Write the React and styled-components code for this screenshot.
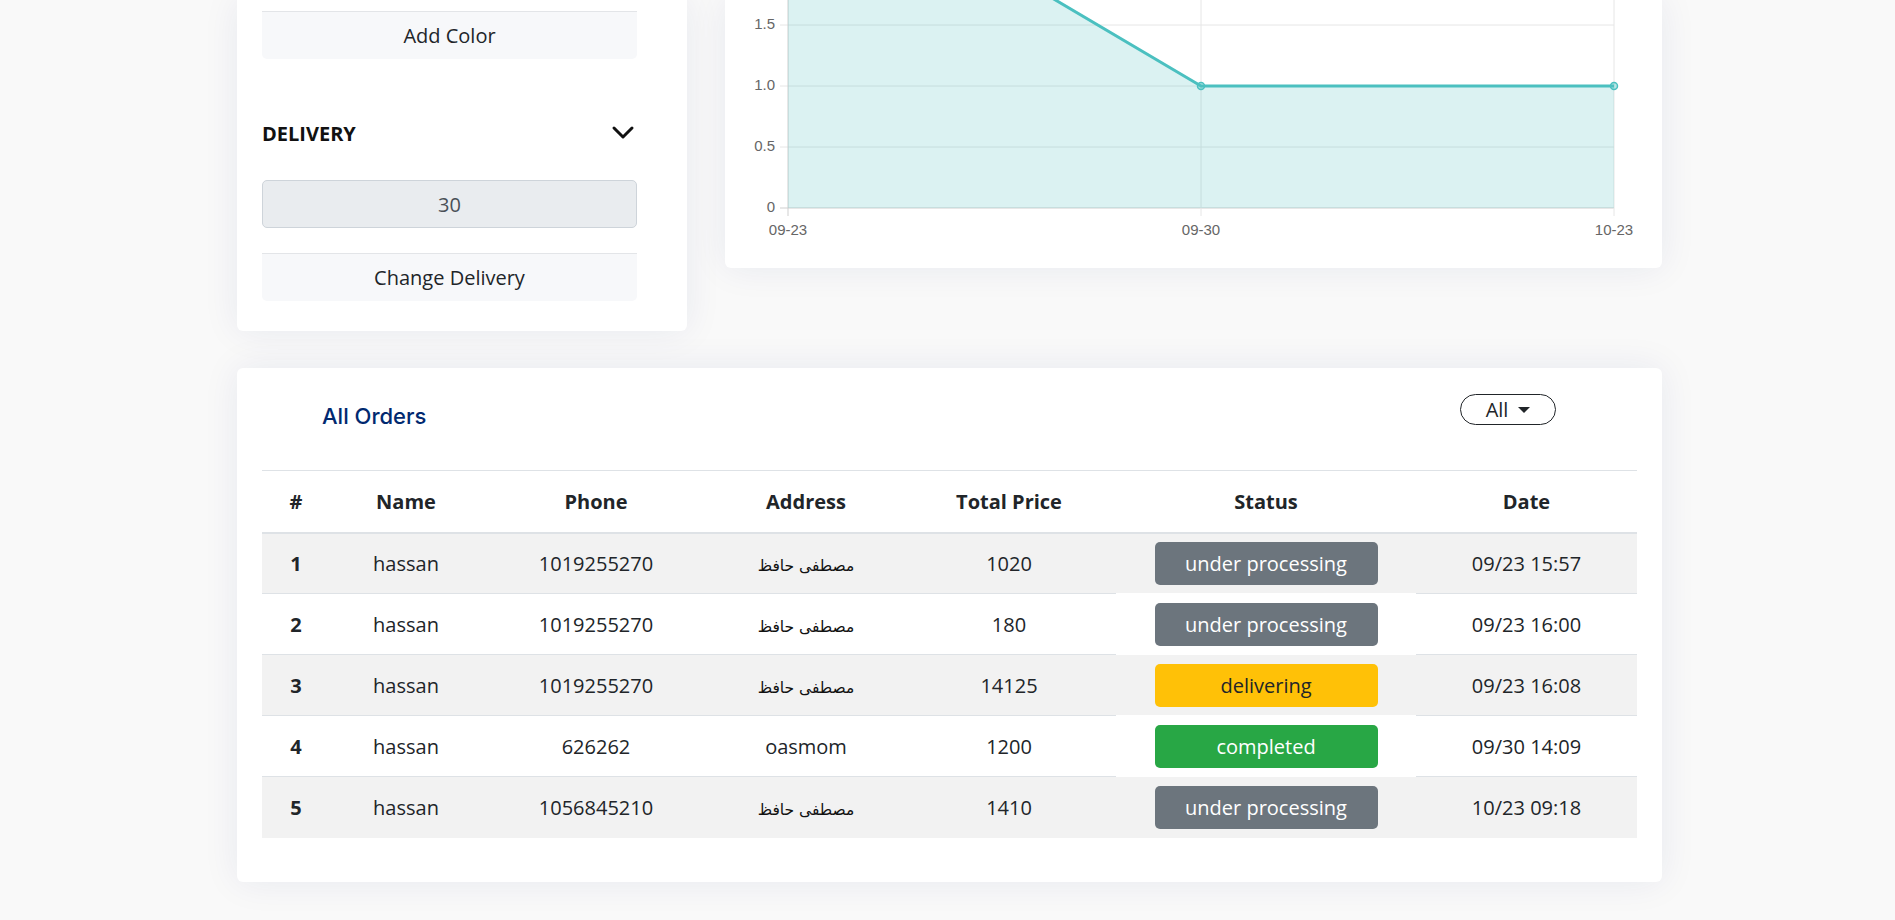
import React from 'react'
import styled, { createGlobalStyle } from 'styled-components'

const GlobalStyle = createGlobalStyle`
  * { box-sizing: border-box; }
  body {
    margin: 0;
    background: #f9f9f9;
    font-family: "Open Sans", "DejaVu Sans", sans-serif;
    color: #212529;
  }
`

const orders = [
  { id: 1, name: 'hassan', phone: '1019255270', address: 'مصطفى حافظ', total: 1020, status: 'under processing', date: '09/23 15:57' },
  { id: 2, name: 'hassan', phone: '1019255270', address: 'مصطفى حافظ', total: 180, status: 'under processing', date: '09/23 16:00' },
  { id: 3, name: 'hassan', phone: '1019255270', address: 'مصطفى حافظ', total: 14125, status: 'delivering', date: '09/23 16:08' },
  { id: 4, name: 'hassan', phone: '626262', address: 'oasmom', total: 1200, status: 'completed', date: '09/30 14:09' },
  { id: 5, name: 'hassan', phone: '1056845210', address: 'مصطفى حافظ', total: 1410, status: 'under processing', date: '10/23 09:18' },
]

const columns = [
  { label: '#', width: 68 },
  { label: 'Name', width: 152 },
  { label: 'Phone', width: 228 },
  { label: 'Address', width: 192 },
  { label: 'Total Price', width: 214 },
  { label: 'Status', width: 300 },
  { label: 'Date', width: 221 },
]

const isArabic = (s) => /[\u0600-\u06FF]/.test(s)

// chart geometry, in card coordinates
const X = [63, 476, 889]
const yOf = (v) => 208 - 122 * v
const values = [3, 1, 1]
const yTicks = [0, 0.5, 1, 1.5]
const xLabels = ['09-23', '09-30', '10-23']

function SalesChart() {
  const pts = X.map((x, i) => `${x},${yOf(values[i])}`).join(' ')
  const area = `${pts} ${X[2]},${yOf(0)} ${X[0]},${yOf(0)}`
  return (
    <ChartSvg viewBox="0 0 937 248" width="937" height="248">
      {yTicks.map((t) => (
        <g key={t}>
          <line x1={X[0] - 8} x2={X[2]} y1={yOf(t)} y2={yOf(t)} stroke={t === 0 ? '#cfcfcf' : '#e6e6e6'} strokeWidth="1" />
          <text x={50} y={yOf(t)} textAnchor="end" dominantBaseline="middle" fill="#666" fontSize="15">
            {t === 0 ? '0' : t.toFixed(1)}
          </text>
        </g>
      ))}
      {X.map((x, i) => (
        <g key={x}>
          <line x1={x} x2={x} y1={-200} y2={yOf(0) + 8} stroke={i === 0 ? '#cfcfcf' : '#e6e6e6'} strokeWidth="1" />
          <text x={x} y={231} textAnchor="middle" dominantBaseline="middle" fill="#666" fontSize="15">
            {xLabels[i]}
          </text>
        </g>
      ))}
      <polygon points={area} fill="rgba(75,192,192,0.2)" />
      <polyline points={pts} fill="none" stroke="#4bc0c0" strokeWidth="3" strokeLinejoin="round" />
      {X.slice(1).map((x, i) => (
        <circle key={x} cx={x} cy={yOf(values[i + 1])} r="3.5" fill="rgba(75,192,192,0.4)" stroke="#4bc0c0" strokeWidth="1.5" />
      ))}
    </ChartSvg>
  )
}

function Chevron() {
  return (
    <svg width="24" height="16" viewBox="0 0 24 16">
      <polyline points="3,3 12,12 21,3" fill="none" stroke="#111" strokeWidth="3" strokeLinecap="round" strokeLinejoin="round" />
    </svg>
  )
}

export default function App() {
  return (
    <Page>
      <GlobalStyle />
      <TopRow>
        <SideCard>
          <FooterButton $top={11}>Add Color</FooterButton>
          <SectionHeader>
            <SectionTitle>Delivery</SectionTitle>
            <Chevron />
          </SectionHeader>
          <DeliveryInput value="30" readOnly />
          <FooterButton $top={25}>Change Delivery</FooterButton>
        </SideCard>
        <ChartCard>
          <SalesChart />
        </ChartCard>
      </TopRow>

      <OrdersCard>
        <OrdersHeader>
          <CardTitle>All Orders</CardTitle>
          <FilterPill>
            All <Caret />
          </FilterPill>
        </OrdersHeader>
        <Table>
          <colgroup>
            {columns.map((c) => (
              <col key={c.label} style={{ width: c.width }} />
            ))}
          </colgroup>
          <thead>
            <tr>
              {columns.map((c) => (
                <Th key={c.label}>{c.label}</Th>
              ))}
            </tr>
          </thead>
          <tbody>
            {orders.map((o, i) => (
              <Row key={o.id} $striped={i % 2 === 0} $last={i === orders.length - 1}>
                <Td $bold>{o.id}</Td>
                <Td>{o.name}</Td>
                <Td>{o.phone}</Td>
                <Td>
                  {isArabic(o.address) ? <ArabicText dir="rtl">{o.address}</ArabicText> : o.address}
                </Td>
                <Td>{o.total}</Td>
                <StatusTd>
                  <Badge $status={o.status}>{o.status}</Badge>
                </StatusTd>
                <Td>{o.date}</Td>
              </Row>
            ))}
          </tbody>
        </Table>
      </OrdersCard>
    </Page>
  )
}

const Page = styled.div`
  width: 1425px;
  margin-left: 237px;
  padding-bottom: 40px;
`

const TopRow = styled.div`
  display: flex;
  align-items: flex-start;
  gap: 38px;
`

const cardShadow = '0 0 36px rgba(1, 41, 112, 0.08)'

const SideCard = styled.div`
  width: 450px;
  flex-shrink: 0;
  background: #fff;
  border-radius: 0 0 6px 6px;
  padding: 0 50px 30px 25px;
  box-shadow: ${cardShadow};
`

const FooterButton = styled.button`
  display: block;
  width: 100%;
  height: 48px;
  margin-top: ${(p) => p.$top || 0}px;
  background: #f7f8fa;
  border: none;
  border-top: 1px solid #e3e5e8;
  border-radius: 0 0 5px 5px;
  font-family: inherit;
  font-size: 20px;
  color: #212529;
  cursor: pointer;
`

const SectionHeader = styled.div`
  display: flex;
  align-items: center;
  justify-content: space-between;
  height: 48px;
  margin-top: 50px;
  padding-right: 2px;
`

const SectionTitle = styled.h3`
  margin: 0;
  font-size: 20px;
  font-weight: 700;
  text-transform: uppercase;
  color: #111;
`

const DeliveryInput = styled.input`
  display: block;
  width: 100%;
  height: 48px;
  margin-top: 23px;
  background: #e9ecef;
  border: 1px solid #ced4da;
  border-radius: 5px;
  text-align: center;
  font-family: inherit;
  font-size: 20px;
  color: #495057;
  outline: none;
`

const ChartCard = styled.div`
  width: 937px;
  background: #fff;
  border-radius: 0 0 6px 6px;
  padding-bottom: 20px;
  box-shadow: ${cardShadow};
`

const ChartSvg = styled.svg`
  display: block;
  overflow: visible;
  font-family: "Liberation Sans", Arial, sans-serif;
`

const OrdersCard = styled.div`
  margin-top: 37px;
  background: #fff;
  border-radius: 6px;
  padding: 26px 25px 44px;
  box-shadow: ${cardShadow};
`

const OrdersHeader = styled.div`
  display: flex;
  align-items: flex-start;
  justify-content: space-between;
  padding: 0 81px 0 60px;
`

const CardTitle = styled.h5`
  margin: 7px 0 0;
  line-height: 30px;
  font-family: Inter, "Noto Sans", sans-serif;
  font-size: 22px;
  font-weight: 500;
  color: #012970;
`

const FilterPill = styled.button`
  display: flex;
  align-items: center;
  justify-content: center;
  gap: 10px;
  width: 96px;
  height: 31px;
  background: transparent;
  border: 1px solid #212529;
  border-radius: 16px;
  font-family: inherit;
  font-size: 20px;
  color: #212529;
  padding: 0;
`

const Caret = styled.span`
  width: 0;
  height: 0;
  border-top: 6px solid #212529;
  border-left: 6px solid transparent;
  border-right: 6px solid transparent;
`

const Table = styled.table`
  width: 100%;
  margin-top: 39px;
  border-collapse: collapse;
  table-layout: fixed;
  font-size: 20px;
`

const Th = styled.th`
  height: 62px;
  padding: 0;
  border-top: 1px solid #dee2e6;
  border-bottom: 2px solid #dee2e6;
  font-weight: 700;
  text-align: center;
  color: #212529;
`

const Row = styled.tr`
  background: ${(p) => (p.$striped ? '#f2f2f2' : '#fff')};

  & > td {
    border-bottom: ${(p) => (p.$last ? 'none' : '1px solid #dee2e6')};
  }
`

const Td = styled.td`
  height: 61px;
  padding: 0;
  text-align: center;
  font-weight: ${(p) => (p.$bold ? 700 : 400)};
  color: #212529;
`

const ArabicText = styled.span`
  font-family: "DejaVu Sans", sans-serif;
  font-size: 15.5px;
  color: #111;
`

const StatusTd = styled(Td)`
  && {
    border-bottom-color: #fff;
  }
`

const badgeColors = {
  'under processing': { bg: '#6c757d', fg: '#fff' },
  delivering: { bg: '#ffc107', fg: '#212529' },
  completed: { bg: '#28a745', fg: '#fff' },
}

const Badge = styled.span`
  display: inline-block;
  width: 223px;
  height: 43px;
  line-height: 43px;
  border-radius: 5px;
  background: ${(p) => badgeColors[p.$status].bg};
  color: ${(p) => badgeColors[p.$status].fg};
  vertical-align: middle;
`
